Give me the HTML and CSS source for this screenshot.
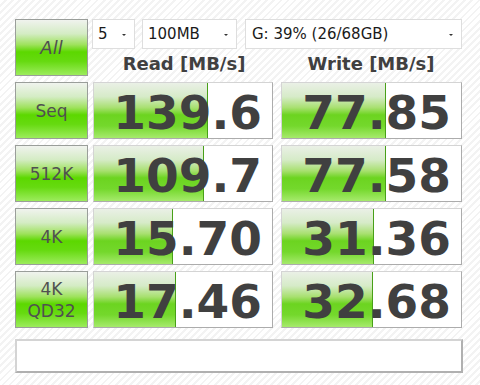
FILE: index.html
```html
<!DOCTYPE html>
<html>
<head>
<meta charset="utf-8">
<link rel="stylesheet" href="styles.css">
</head>
<body>
<div class="app">
  <div class="top">
    <div class="btn all">All</div>
    <div class="controls">
      <div class="selects">
        <div class="sel s-count"><span>5</span><i class="arr"></i></div>
        <div class="sel s-size"><span>100MB</span><i class="arr"></i></div>
        <div class="sel s-drive"><span>G: 39% (26/68GB)</span><i class="arr"></i></div>
      </div>
      <div class="heads">
        <div class="head">Read [MB/s]</div>
        <div class="head">Write [MB/s]</div>
      </div>
    </div>
  </div>
  <div class="grid">
    <div class="btn">Seq</div>
    <div class="val read"><div class="bar" style="width:114px"></div><span class="num">139.6</span></div>
    <div class="val write"><div class="bar" style="width:104px"></div><span class="num">77.85</span></div>

    <div class="btn">512K</div>
    <div class="val read"><div class="bar" style="width:110px"></div><span class="num">109.7</span></div>
    <div class="val write"><div class="bar" style="width:104px"></div><span class="num">77.58</span></div>

    <div class="btn">4K</div>
    <div class="val read"><div class="bar" style="width:79px"></div><span class="num">15.70</span></div>
    <div class="val write"><div class="bar" style="width:92px"></div><span class="num">31.36</span></div>

    <div class="btn two">4K<br>QD32</div>
    <div class="val read"><div class="bar" style="width:82px"></div><span class="num">17.46</span></div>
    <div class="val write"><div class="bar" style="width:91px"></div><span class="num">32.68</span></div>
  </div>
  <div class="status"></div>
</div>
</body>
</html>
```
FILE: styles.css
```css
html, body {
  margin: 0;
  padding: 0;
}
body {
  width: 480px;
  height: 385px;
  overflow: hidden;
  background: repeating-linear-gradient(135deg, #ffffff 0 3px, #f3f3f3 3px 5px);
  font-family: "DejaVu Sans", Verdana, sans-serif;
  color: #404040;
}
.app {
  padding: 19px 0 0 15px;
  width: 447px;
  display: flex;
  flex-direction: column;
  gap: 6px;
}
.top {
  display: flex;
  align-items: flex-start;
}
.btn {
  box-sizing: border-box;
  width: 73px;
  height: 57px;
  border: 1px solid #9a9e9a;
  background: linear-gradient(to bottom, #f0f3ee 0%, #d4ecc4 25%, #9ee25c 45%, #5cd800 58%, #66da10 75%, #9cec5c 100%);
  display: flex;
  align-items: center;
  justify-content: center;
  text-align: center;
  font-size: 17px;
  line-height: 22px;
  color: #505050;
}
.btn.all {
  font-style: italic;
  font-size: 18px;
}
.controls {
  margin-left: 4px;
  flex: 1;
}
.selects {
  display: flex;
  gap: 7px;
  height: 30px;
}
.sel {
  box-sizing: border-box;
  height: 30px;
  background: #fff;
  border: 1px solid #dedede;
  display: flex;
  align-items: center;
  justify-content: space-between;
  padding: 0 8px 0 5px;
  font-size: 15px;
  color: #1a1a1a;
}
.s-count { width: 43px; }
.s-size { width: 95px; }
.s-drive { flex: 1; padding-left: 6px; margin-left: 1px; }
.arr {
  width: 0;
  height: 0;
  border-left: 2px solid transparent;
  border-right: 2px solid transparent;
  border-top: 2px solid #333;
  margin-top: 1px;
}
.heads {
  display: grid;
  grid-template-columns: 184px 182px;
  column-gap: 4px;
  height: 27px;
}
.head {
  text-align: center;
  font-weight: bold;
  font-size: 18px;
  line-height: 20px;
  padding-top: 5px;
  color: #404040;
}
.grid {
  display: grid;
  grid-template-columns: 78px 188px 181px;
  grid-auto-rows: 57px;
  row-gap: 6px;
}
.val {
  position: relative;
  box-sizing: border-box;
  height: 57px;
  background: #fff;
  border: 1px solid;
  border-color: #d4d4d4 #acacac #acacac #d4d4d4;
  text-align: right;
}
.val.read { width: 180px; }
.val.write { width: 181px; }
.bar {
  position: absolute;
  left: 0;
  top: 0;
  bottom: 0;
  box-sizing: border-box;
  border-right: 1px solid #48a018;
  background: linear-gradient(to bottom, #eaf0e6 0%, #d6ebc8 25%, #a8e070 45%, #6cd420 58%, #74d82c 78%, #a6ea6c 100%);
}
.num {
  position: relative;
  display: block;
  padding: 5px 10px 0 0;
  font-size: 47px;
  line-height: 50px;
  font-weight: bold;
  color: #404040;
}
.status {
  margin-top: 5px;
  box-sizing: border-box;
  height: 34px;
  width: 448px;
  background: #fff;
  border: 2px solid;
  border-color: #d4d4d4 #b0b0b0 #b0b0b0 #d4d4d4;
}
```
